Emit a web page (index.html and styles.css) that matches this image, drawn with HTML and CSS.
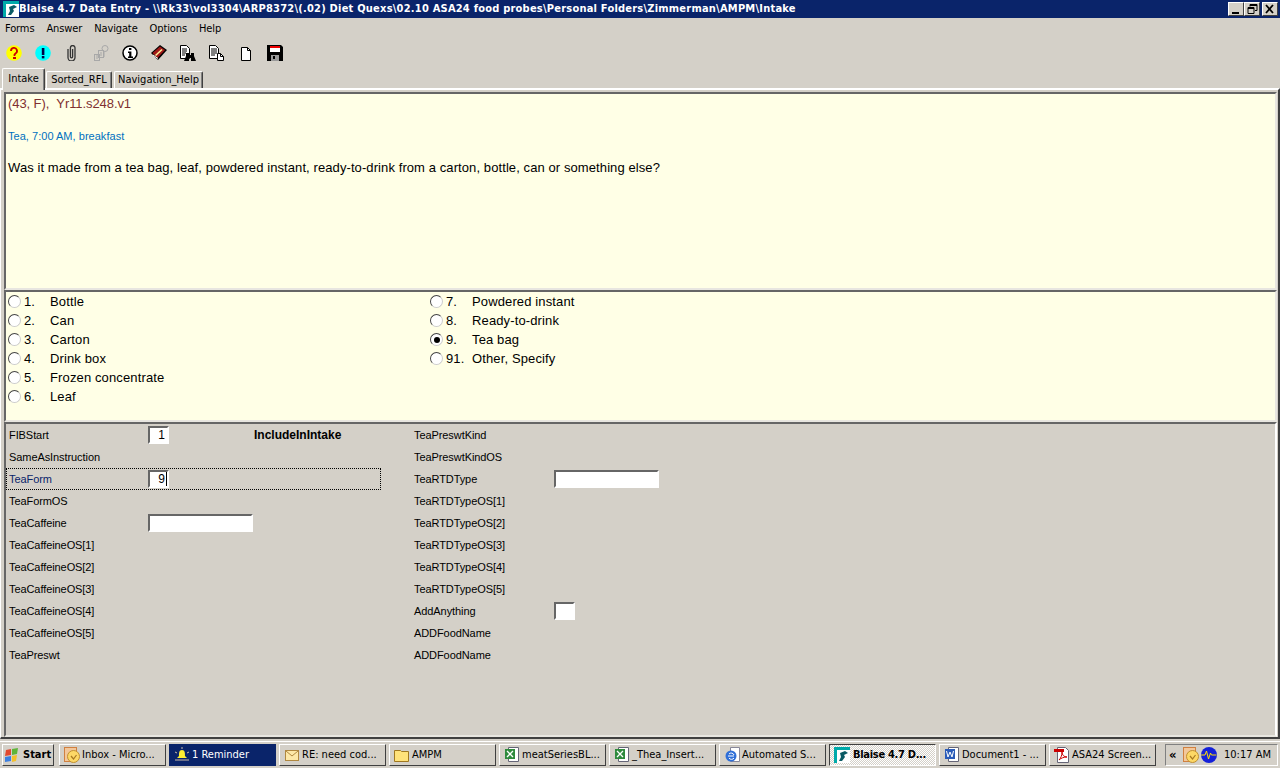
FILE: index.html
```html
<!DOCTYPE html>
<html lang="en">
<head>
<meta charset="utf-8">
<title>Blaise 4.7 Data Entry</title>
<link rel="stylesheet" href="styles.css">
</head>
<body>
<div class="app">
  <header class="titlebar">
    <svg class="appicon" viewBox="0 0 16 16" width="16" height="16"><rect width="16" height="16" fill="#fff"/><rect x="0" y="0" width="16" height="3" fill="#0aa"/><rect x="0" y="0" width="3" height="16" fill="#0aa"/><path d="M6 6 L11 4 L14 6 L10 8 L11 10 L8 14 L5 14 L7 10 Z" fill="#0a5a64"/></svg>
    <span class="title">Blaise 4.7 Data Entry - \\Rk33\vol3304\ARP8372\(.02) Diet Quexs\02.10 ASA24 food probes\Personal Folders\Zimmerman\AMPM\Intake</span>
    <div class="winbtns">
      <button class="winbtn"><svg viewBox="0 0 14 12" width="14" height="12"><rect x="3" y="9" width="7" height="2" fill="#000"/></svg></button>
      <button class="winbtn"><svg viewBox="0 0 14 12" width="14" height="12"><path d="M5 1.5h7v6h-2M5 1.5v2M3 4.5h6v6h-6z" fill="none" stroke="#000"/><rect x="5" y="1" width="7" height="2" fill="#000"/><rect x="3" y="4" width="6" height="2" fill="#000"/></svg></button>
      <button class="winbtn winbtn-close"><svg viewBox="0 0 14 12" width="14" height="12"><path d="M3 2l7 8M10 2l-7 8" stroke="#000" stroke-width="1.8"/></svg></button>
    </div>
  </header>
  <nav class="menubar"><span>Forms</span><span>Answer</span><span>Navigate</span><span>Options</span><span>Help</span></nav>
  <div class="toolbar">
    <svg class="tool" viewBox="0 0 16 16"><circle cx="8" cy="8" r="7.8" fill="#ff0"/><path d="M5 6a3 3 0 1 1 4.500 2.500L8.500 9.500v1.500" fill="none" stroke="#c00" stroke-width="1.800"/><rect x="7" y="12" width="3" height="2" fill="#c00"/></svg>
    <svg class="tool" viewBox="0 0 16 16"><circle cx="8" cy="8" r="7.8" fill="#0ff"/><rect x="6.800" y="3" width="2.600" height="7" fill="#004"/><rect x="6.800" y="11" width="2.600" height="2.400" fill="#004"/></svg>
    <svg class="tool tool-clip" viewBox="0 0 16 16"><path d="M4 4v8.500a3.500 3.500 0 0 0 7 0V2.800a2.300 2.300 0 0 0-4.600 0v9a1.100 1.100 0 0 0 2.200 0V4" fill="none" stroke="#333" stroke-width="1.300"/></svg>
    <svg class="tool" viewBox="0 0 16 16"><g fill="none" stroke="#a8a8a8"><rect x="1.500" y="9.500" width="5" height="6"/><rect x="5.500" y="5.500" width="5" height="7"/><circle cx="12" cy="3.500" r="3"/><path d="M3 11h2M3 13h2M7 8h2M7 10h2M11 7v5"/></g></svg>
    <svg class="tool" viewBox="0 0 16 16"><circle cx="8" cy="8" r="7" fill="#fff" stroke="#000" stroke-width="1.500"/><rect x="7" y="3" width="2.400" height="2" fill="#000"/><path d="M6 6.500h3.400v5H11V13H6v-1.500h1.200v-3.500H6z" fill="#000"/></svg>
    <svg class="tool" viewBox="0 0 16 16"><path d="M0 8L9 0l7 5-9 10z" fill="#000"/><path d="M1.500 8L9 1.500l5 3.500-7.500 8z" fill="#a01818"/><path d="M4.500 10.500L11 4.500" stroke="#fe9" stroke-width="1.600"/><path d="M2 10l5 3.500" stroke="#fff"/></svg>
    <svg class="tool" viewBox="0 0 16 16"><path d="M.5.500h6l3 3v10h-9z" fill="#fff" stroke="#000"/><path d="M2 4h5M2 6h5M2 8h4M2 10h3" stroke="#000"/><path d="M6 8h3v2h2V8h3v3l2 5h-5v-3H9v3H4l2-5z" fill="#000"/></svg>
    <svg class="tool" viewBox="0 0 16 16"><path d="M.5.500h6l3 3v10h-9z" fill="#fff" stroke="#000"/><path d="M2 4h6M2 6h6M2 8h6M2 10h4" stroke="#000"/><path d="M8.500 8.500h3l3 3v4h-6z" fill="#fff" stroke="#000"/><path d="M11.500 8.500v3h3" fill="none" stroke="#000"/></svg>
    <svg class="tool" viewBox="0 0 16 16"><path d="M3.500 2.500h6l3 3v10h-9z" fill="#fff" stroke="#000"/><path d="M9.500 2.500v3h3" fill="none" stroke="#000"/></svg>
    <svg class="tool" viewBox="0 0 16 16"><path d="M0 0h14l2 2v14H0z" fill="#000"/><rect x="3" y="1" width="10" height="6" fill="#fff"/><rect x="3" y="1" width="10" height="2" fill="#e00"/><rect x="4" y="10" width="8" height="6" fill="#999"/><rect x="6" y="11" width="2" height="3" fill="#000"/></svg>
  </div>
  <div class="tabs">
    <div class="tab tab-active tab-1">Intake</div>
    <div class="tab tab-2">Sorted_RFL</div>
    <div class="tab tab-3">Navigation_Help</div>
  </div>
  <main class="content">
    <section class="panel question">
      <p class="q-id">(43, F), &nbsp;Yr11.s248.v1</p>
      <p class="q-food">Tea, 7:00 AM, breakfast</p>
      <p class="q-text">Was it made from a tea bag, leaf, powdered instant, ready-to-drink from a carton, bottle, can or something else?</p>
    </section>
    <section class="panel answers">
      <div class="col col-a">
        <div class="opt"><i class="radio"></i><span class="num">1.</span><span>Bottle</span></div>
        <div class="opt"><i class="radio"></i><span class="num">2.</span><span>Can</span></div>
        <div class="opt"><i class="radio"></i><span class="num">3.</span><span>Carton</span></div>
        <div class="opt"><i class="radio"></i><span class="num">4.</span><span>Drink box</span></div>
        <div class="opt"><i class="radio"></i><span class="num">5.</span><span>Frozen concentrate</span></div>
        <div class="opt"><i class="radio"></i><span class="num">6.</span><span>Leaf</span></div>
      </div>
      <div class="col">
        <div class="opt"><i class="radio"></i><span class="num">7.</span><span>Powdered instant</span></div>
        <div class="opt"><i class="radio"></i><span class="num">8.</span><span>Ready-to-drink</span></div>
        <div class="opt"><i class="radio radio-on"></i><span class="num">9.</span><span>Tea bag</span></div>
        <div class="opt"><i class="radio"></i><span class="num">91.</span><span>Other, Specify</span></div>
      </div>
    </section>
    <section class="fields">
      <div class="fcol fcol-a">
        <div class="frow"><span class="lab">FIBStart</span><span class="inp inp-s">1</span><b class="extra">IncludeInIntake</b></div>
        <div class="frow"><span class="lab">SameAsInstruction</span></div>
        <div class="frow frow-active"><span class="lab lab-active">TeaForm</span><span class="inp inp-s inp-caret">9</span></div>
        <div class="frow"><span class="lab">TeaFormOS</span></div>
        <div class="frow"><span class="lab">TeaCaffeine</span><span class="inp inp-l"></span></div>
        <div class="frow"><span class="lab">TeaCaffeineOS[1]</span></div>
        <div class="frow"><span class="lab">TeaCaffeineOS[2]</span></div>
        <div class="frow"><span class="lab">TeaCaffeineOS[3]</span></div>
        <div class="frow"><span class="lab">TeaCaffeineOS[4]</span></div>
        <div class="frow"><span class="lab">TeaCaffeineOS[5]</span></div>
        <div class="frow"><span class="lab">TeaPreswt</span></div>
      </div>
      <div class="fcol fcol-b">
        <div class="frow"><span class="lab">TeaPreswtKind</span></div>
        <div class="frow"><span class="lab">TeaPreswtKindOS</span></div>
        <div class="frow"><span class="lab">TeaRTDType</span><span class="inp inp-l"></span></div>
        <div class="frow"><span class="lab">TeaRTDTypeOS[1]</span></div>
        <div class="frow"><span class="lab">TeaRTDTypeOS[2]</span></div>
        <div class="frow"><span class="lab">TeaRTDTypeOS[3]</span></div>
        <div class="frow"><span class="lab">TeaRTDTypeOS[4]</span></div>
        <div class="frow"><span class="lab">TeaRTDTypeOS[5]</span></div>
        <div class="frow"><span class="lab">AddAnything</span><span class="inp inp-s"></span></div>
        <div class="frow"><span class="lab">ADDFoodName</span></div>
        <div class="frow"><span class="lab">ADDFoodName</span></div>
      </div>
    </section>
  </main>
  <footer class="taskbar">
    <div class="task start"><svg viewBox="0 0 16 16" width="16" height="16"><path d="M2 3l5-1v6l-6 1z" fill="#e2492f"/><path d="M8 2l6-1-1 6-5 1z" fill="#5fb53a"/><path d="M1 10l6-1v5l-6 1z" fill="#3c7fe0"/><path d="M8 9l5-1-1 6-4 1z" fill="#f5c028"/></svg><b>Start</b></div>
    <div class="task"><svg class="ticon" viewBox="0 0 16 16"><rect x=".5" y=".5" width="12" height="14" fill="#f3c79a" stroke="#d08040"/><circle cx="9.500" cy="9.500" r="6" fill="#fdd866" stroke="#c09030"/><path d="M7 9l2.500 3 3-4" fill="none" stroke="#a87820" stroke-width="1.200"/></svg><span>Inbox - Micro...</span></div>
    <div class="task t-dark"><svg class="ticon" viewBox="0 0 16 16"><path d="M8 3c3 0 3 3 3 6l2 2H3l2-2c0-3 0-6 3-6z" fill="#fe3"/><path d="M8 0v2M1 5l2 1M15 5l-2 1M1 13h14" stroke="#cba"/></svg><span>1 Reminder</span></div>
    <div class="task"><svg class="ticon" viewBox="0 0 16 16"><rect x="1.500" y="3.500" width="13" height="10" fill="#fde8a8" stroke="#b08840"/><path d="M2 4l6 5 6-5" fill="none" stroke="#b08840"/></svg><span>RE: need cod...</span></div>
    <div class="task"><svg class="ticon" viewBox="0 0 16 16"><path d="M.5 3.500h6l1 1h7v10h-14z" fill="#ffe27a" stroke="#a07820"/></svg><span>AMPM</span></div>
    <div class="task"><svg class="ticon" viewBox="0 0 16 16"><path d="M4.500 .5h10v14h-10z" fill="#fff" stroke="#667"/><rect x="1" y="2" width="10" height="10" fill="#2e8a3c"/><path d="M3 4l6 6M9 4l-6 6" stroke="#fff" stroke-width="1.300"/></svg><span>meatSeriesBL...</span></div>
    <div class="task"><svg class="ticon" viewBox="0 0 16 16"><path d="M4.500 .5h10v14h-10z" fill="#fff" stroke="#667"/><rect x="1" y="2" width="10" height="10" fill="#2e8a3c"/><path d="M3 4l6 6M9 4l-6 6" stroke="#fff" stroke-width="1.300"/></svg><span>_Thea_Insert...</span></div>
    <div class="task"><svg class="ticon" viewBox="0 0 16 16"><path d="M6.500 .5h9v14h-9z" fill="#fff" stroke="#889"/><circle cx="7" cy="9" r="5.500" fill="#2f6fd8"/><path d="M4 9h6M5 7a3 3 0 0 1 5 1M5 11a3 3 0 0 0 5 0" stroke="#fff" fill="none"/></svg><span>Automated S...</span></div>
    <div class="task t-on"><svg class="ticon" viewBox="0 0 16 16"><rect width="16" height="16" fill="#fff"/><rect width="16" height="3" fill="#0aa"/><rect width="3" height="16" fill="#0aa"/><path d="M6 6 L11 4 L14 6 L10 8 L11 10 L8 14 L5 14 L7 10 Z" fill="#0a5a64"/></svg><b class="t-on-text">Blaise 4.7 D...</b></div>
    <div class="task"><svg class="ticon" viewBox="0 0 16 16"><path d="M4.500 .5h10v14h-10z" fill="#fff" stroke="#667"/><rect x="1" y="2" width="10" height="10" fill="#2a5bb8"/><path d="M2.500 4l1.500 6 2-5 2 5 1.500-6" fill="none" stroke="#fff"/></svg><span>Document1 - ...</span></div>
    <div class="task"><svg class="ticon" viewBox="0 0 16 16"><path d="M3.500 .5h8l3 3v12h-11z" fill="#fff" stroke="#667"/><rect x="0" y="2" width="10" height="3" fill="#c00"/><path d="M5 13c2-2 3-5 3-8 0 3 2 5 5 5-3 0-6 1-8 3z" fill="none" stroke="#c00"/></svg><span>ASA24 Screen...</span></div>
    <div class="tray"><b class="chev">&laquo;</b><svg class="ticon" viewBox="0 0 16 16"><rect x=".5" y=".5" width="12" height="14" fill="#f3c79a" stroke="#d08040"/><circle cx="9.500" cy="9.500" r="6" fill="#fdd866" stroke="#c09030"/><path d="M7 9l2.500 3 3-4" fill="none" stroke="#a87820" stroke-width="1.200"/></svg><svg class="ticon ticon-wave" viewBox="0 0 16 16"><circle cx="8" cy="8" r="8" fill="#1420d8"/><path d="M0 8h4l1.500-4 2 8 2-6 1 2h5" fill="none" stroke="#fd0"/></svg><span class="clock">10:17 AM</span></div>
  </footer>
</div>
</body>
</html>
```
FILE: styles.css
```css
* { box-sizing: border-box; }
html, body { margin: 0; padding: 0; }
body { width: 1280px; height: 768px; overflow: hidden; background: #d4d0c8; font-family: "DejaVu Sans", sans-serif; color: #000; }
.app { width: 1280px; height: 768px; display: flex; flex-direction: column; }
p { margin: 0; }

.titlebar { height: 18px; background: #0a246a; display: flex; align-items: center; padding-left: 3px; flex: none; }
.appicon { flex: none; }
.title { color: #fff; font: bold 11px/18px "DejaVu Sans", sans-serif; font-stretch: condensed; letter-spacing: .22px; white-space: nowrap; }
.winbtns { margin-left: auto; display: flex; padding-right: 2px; }
.winbtn { width: 16px; height: 14px; padding: 0; margin: 0; background: #d4d0c8; border: 1px solid; border-color: #fff #404040 #404040 #fff; display: flex; align-items: center; justify-content: center; }
.winbtn-close { margin-left: 2px; }

.menubar { height: 20px; display: flex; padding-left: 5px; gap: 12px; font: 11px/21px "DejaVu Sans", sans-serif; font-stretch: condensed; letter-spacing: -.12px; flex: none; }

.toolbar { height: 30px; display: flex; align-items: center; padding-left: 6px; gap: 12px; flex: none; }
.tool { width: 16px; height: 16px; flex: none; margin-right: 1px; }

.tabs { height: 20px; display: flex; align-items: flex-end; padding-left: 2px; flex: none; position: relative; z-index: 1; }
.tab { height: 17px; font: 11px/15px "DejaVu Sans", sans-serif; font-stretch: condensed; text-align: center; background: #d4d0c8; border: 1px solid #fff; border-right: 1px solid #404040; box-shadow: inset -1px 0 #808080; border-bottom: 0; border-radius: 2px 2px 0 0; margin-right: 1px; }
.tab-1 { width: 43px; }
.tab-2 { width: 66px; margin-right: 2px; }
.tab-3 { width: 89px; }
.tab-active { height: 22px; line-height: 20px; margin-bottom: -2px; margin-right: 1px; align-self: flex-end; }

.content { flex: none; height: 651px; border-top: 2px solid #fff; border-left: 1px solid #fff; border-right: 2px solid #404040; border-bottom: 2px solid #404040; padding: 2px 1px 0 3px; display: flex; flex-direction: column; }
.panel { background: #ffffe6; border: 2px solid; border-color: #666 #e8e6e0 #e8e6e0 #666; font-family: "Liberation Sans", sans-serif; font-size: 13px; flex: none; }
.question { height: 198px; padding: 2px; }
.q-id { color: #7f3030; font-size: 13px; line-height: 16px; letter-spacing: -.08px; }
.q-food { color: #0070c0; font-size: 11px; line-height: 16px; margin-top: 16px; letter-spacing: .03px; }
.q-text { line-height: 16px; margin-top: 16px; letter-spacing: .09px; }
.answers { height: 132px; display: flex; letter-spacing: .13px; }
.col-a { width: 422px; }
.opt { height: 19px; display: flex; align-items: center; line-height: 19px; }
.radio { width: 13px; height: 13px; border-radius: 50%; background: #fff; border: 1px solid; border-color: #444 #ccc #ccc #444; margin: 0 3px 0 2px; flex: none; display: flex; align-items: center; justify-content: center; }
.radio-on::after { content: ""; width: 6px; height: 6px; border-radius: 50%; background: #000; }
.num { width: 26px; flex: none; }

.fields { flex: 1; display: flex; border: 2px solid; border-color: #666 #fff #e8e6e0 #666; font-family: "Liberation Sans", sans-serif; font-size: 11px; letter-spacing: -.08px; }
.fcol-a { width: 405px; }
.frow { height: 22px; display: flex; align-items: center; padding-left: 2px; border: 1px dotted transparent; width: 375px; }
.frow-active { border-color: #000; }
.lab { width: 139px; flex: none; }
.fcol-b .lab { width: 140px; }
.lab-active { color: #0a246a; }
.inp { height: 18px; background: #fff; border: 2px solid; border-color: #666 #fff #fff #666; text-align: right; padding-right: 2px; line-height: 14px; font-size: 12px; letter-spacing: 0; flex: none; }
.inp-s { width: 21px; }
.inp-l { width: 105px; }
.inp-caret { box-shadow: inset -1px 0 0 #000; }
.extra { margin-left: 85px; font-size: 12px; letter-spacing: 0; }

.taskbar { flex: none; height: 27px; margin-top: 2px; border-top: 1px solid #fff; display: flex; align-items: flex-start; padding: 2px 0 0 2px; gap: 3px; font: 11px/18px "DejaVu Sans", sans-serif; font-stretch: condensed; }
.task { width: 107px; height: 22px; display: flex; align-items: center; gap: 2px; padding: 0 4px; border: 1px solid; border-color: #fff #404040 #404040 #fff; white-space: nowrap; overflow: hidden; flex: none; }
.start { width: 52px; margin-right: 2px; padding: 0 1px; gap: 3px; }
.start b { font-size: 11px; }
.t-dark { background: #0a246a; color: #fff; border-color: #0a246a; }
.t-on { border-color: #404040 #fff #fff #404040; background: repeating-conic-gradient(#fff 0 25%, #d4d0c8 0 50%) 0 0 / 2px 2px; }
.t-on-text { letter-spacing: -.3px; margin-left: 1px; }
.ticon { width: 16px; height: 16px; flex: none; }
.ticon-wave { margin-left: 2px; }
.tray { height: 22px; width: 113px; margin-left: 6px; display: flex; align-items: center; padding-left: 3px; border: 1px solid; border-color: #808080 #fff #fff #808080; }
.chev { width: 10px; margin-right: 4px; font-size: 13px; }
.clock { margin-left: 7px; }
```
